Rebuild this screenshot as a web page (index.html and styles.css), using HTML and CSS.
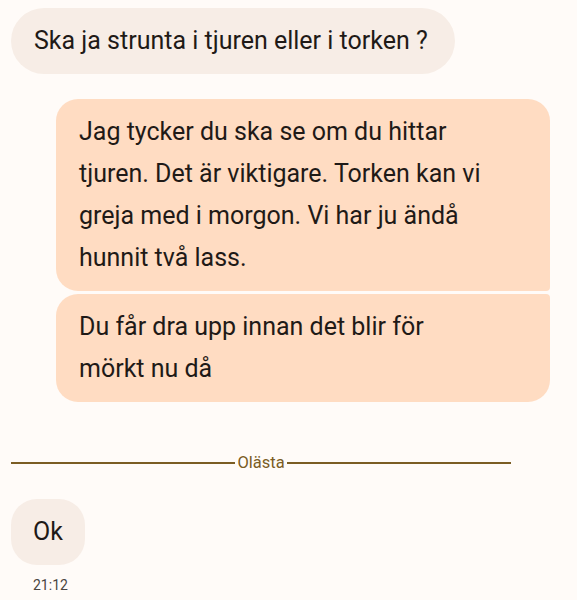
FILE: index.html
```html
<!DOCTYPE html>
<html lang="sv">
<head>
    <meta charset="UTF-8">
    <meta name="viewport" content="width=device-width, initial-scale=1.0">
    <title>Chatt</title>
    <link rel="stylesheet" href="styles.css">
</head>
<body>
    <div class="chat">
        <div class="msg received">Ska ja strunta i tjuren eller i torken ?</div>

        <div class="sent-group">
            <div class="msg sent first">Jag tycker du ska se om du hittar tjuren. Det är viktigare. Torken kan vi greja med i morgon. Vi har ju ändå hunnit två lass.</div>
            <div class="msg sent last">Du får dra upp innan det blir för mörkt nu då</div>
        </div>

        <div class="divider">
            <span class="line"></span>
            <span class="label">Olästa</span>
            <span class="line"></span>
        </div>

        <div class="msg received short">Ok</div>
        <div class="time">21:12</div>
    </div>
</body>
</html>
```

FILE: styles.css
```css
/* Page */
body {
    margin: 0;
    background-color: #fffbf8;
    font-family: Roboto, "Noto Sans", sans-serif;
    color: #1f1a17;
}

.chat {
    padding: 8px 0 0 11px;
    display: flex;
    flex-direction: column;
    align-items: flex-start;
}

/* Bubbles */
.msg {
    font-size: 25px;
    line-height: 42px;
    padding: 12px 27px 12px 23px;
    box-sizing: border-box;
}

.received {
    background-color: #f7ede6;
    border-radius: 33px;
}

.received.short {
    border-radius: 26px;
    padding: 12px 22px;
    margin-top: 24px;
}

.sent-group {
    align-self: flex-end;
    margin: 25px 27px 0 0;
    display: flex;
    flex-direction: column;
    gap: 3px;
    width: 494px;
}

.sent {
    background-color: #ffdcc2;
    border-radius: 22px;
    padding-right: 60px;
}

.sent.first {
    border-bottom-right-radius: 4px;
}

.sent.last {
    border-top-right-radius: 4px;
}

/* Unread divider */
.divider {
    width: 500px;
    margin-top: 49px;
    display: flex;
    align-items: center;
    gap: 2px;
    color: #7b5d24;
}

.divider .line {
    flex: 1;
    height: 1.5px;
    background-color: #7b5d24;
}

.divider .label {
    font-size: 16.5px;
    line-height: 24px;
}

.time {
    margin: 9px 0 0 22px;
    font-size: 14px;
    line-height: 22px;
    color: #4a4541;
}
```
